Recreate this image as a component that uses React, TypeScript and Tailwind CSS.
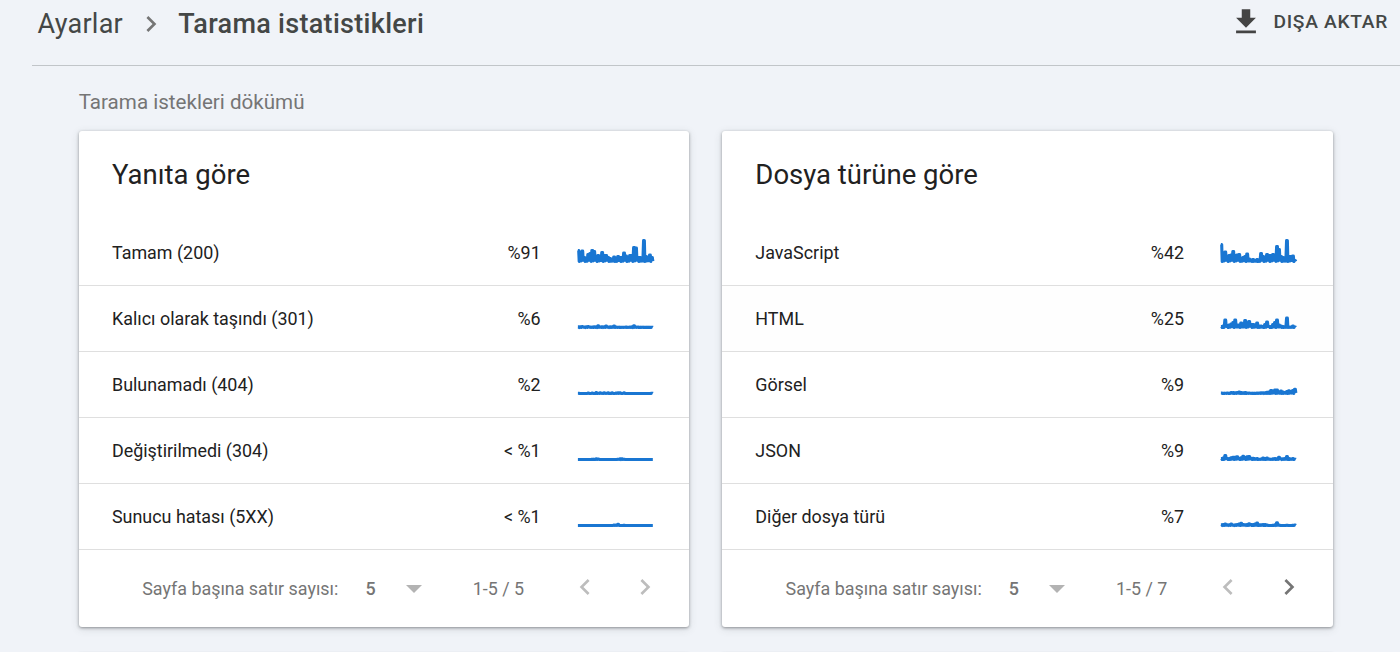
import clsx from 'clsx'

type Row = {
  label: string
  value: string
  // peak heights, left to right
  trend: number[]
  hovered?: boolean
}

const responseRows: Row[] = [
  {
    label: 'Tamam (200)',
    value: '%91',
    trend: [11, 7, 10.5, 4, 3, 7, 8, 11, 10, 5, 6, 5, 9, 6, 6, 4, 3, 2, 4.5, 2, 5, 4, 4, 8.5, 5.5, 4, 6, 6, 14, 13.5, 4, 4, 3, 21, 5, 4, 6.5, 4],
  },
  {
    label: 'Kalıcı olarak taşındı (301)',
    value: '%6',
    trend: [0.6, 0.6, 1, 0.4, 0.8, 1, 0.4, 0.4, 0.8, 0.6, 1.6, 0.5, 0.8, 0.8, 1.5, 0.5, 0.7, 0.8, 1.5, 0.5, 0.3, 0.3, 0.3, 0.3, 0.4, 0.3, 0.4, 0.6, 1.8, 0.4, 0.4, 0.2, 0.3, 0.3, 0.2, 0.2, 0.2, 0.3],
  },
  {
    label: 'Bulunamadı (404)',
    value: '%2',
    trend: [0.3, 0, 0, 0, 0, 0.4, 0, 0.4, 0, 0.9, 0.3, 0.8, 0.2, 0.8, 0.2, 0.7, 0.2, 0.6, 0, 0.4, 0.7, 0.8, 0, 0.7, 0, 0, 0, 0, 0, 0, 0, 0, 0, 0, 0, 0, 0, 0.3],
  },
  {
    label: 'Değiştirilmedi (304)',
    value: '< %1',
    trend: [0, 0, 0, 0, 0, 0, 0, 0.2, 0.2, 0.6, 0.5, 0, 0, 0, 0, 0, 0, 0, 0, 0, 0.3, 0.6, 0.6, 0.2, 0, 0, 0, 0, 0, 0, 0, 0, 0, 0, 0, 0, 0, 0],
  },
  {
    label: 'Sunucu hatası (5XX)',
    value: '< %1',
    trend: [0, 0, 0, 0, 0, 0, 0, 0, 0, 0, 0, 0, 0, 0, 0, 0, 0, 0, 0.4, 0.4, 1.2, 0, 0, 0.2, 0, 0, 0, 0, 0, 0, 0, 0, 0, 0, 0, 0, 0, 0],
  },
]

const fileTypeRows: Row[] = [
  {
    label: 'JavaScript',
    value: '%42',
    trend: [17, 5, 9.5, 4, 6, 6.5, 10, 6, 6.5, 7, 3, 4, 5, 7.5, 2.5, 1.5, 2, 1, 2, 1.5, 8, 5, 4, 7, 6, 6, 7, 6.5, 15, 12, 5, 4, 2, 21, 5, 5, 5.5, 1],
  },
  {
    label: 'HTML',
    value: '%25',
    hovered: true,
    trend: [1, 1.5, 7.5, 1, 2.5, 3.5, 5, 7.5, 2.5, 2.5, 4.5, 3, 7, 4.5, 6, 3, 3, 2.5, 4.5, 1.5, 1.5, 1, 3, 5.5, 1, 1, 3, 5, 7.5, 2.5, 1.5, 1, 0.5, 9.5, 0.5, 0.5, 1.5, 0.5],
  },
  {
    label: 'Görsel',
    value: '%9',
    trend: [0.5, 0.2, 0.3, 0.5, 0.2, 1, 1, 0.8, 1, 1.5, 1, 0.6, 1, 0.5, 0.5, 0.2, 0.2, 0.2, 0.5, 0.5, 0.8, 0.8, 0.8, 1.2, 1.5, 3, 2.5, 3.5, 3.5, 1, 2.5, 1.5, 1, 2, 2.8, 2, 3, 4.3],
  },
  {
    label: 'JSON',
    value: '%9',
    trend: [1, 1.4, 4, 1, 1, 1.8, 2.3, 2.3, 2.8, 1, 1.6, 3.2, 2, 2.8, 3, 1.2, 1.2, 0.8, 1, 0.3, 0.5, 1.5, 1, 1.5, 0.5, 0.3, 0.8, 1, 0.8, 2.3, 0.6, 0.8, 1, 3, 1, 0.5, 1, 0.3],
  },
  {
    label: 'Diğer dosya türü',
    value: '%7',
    trend: [0.8, 1, 1.4, 0.8, 0.8, 1.5, 0.5, 0.6, 1, 1.5, 2.2, 1, 0.8, 1, 1.8, 1, 1, 1.5, 2.5, 0.6, 0.8, 1, 1, 0.4, 0, 0, 0.2, 0.8, 2.8, 0.5, 0, 0, 0, 0.3, 0, 0, 0.2, 0.4],
  },
]

function Sparkline({ values }: { values: number[] }) {
  const points = values
    .flatMap((v, i) => {
      const x = 2.3 + i * 1.99
      return [
        [x - 0.4, 23.5 - v],
        [x + 0.4, 23.5 - v],
        [x + 0.9, 23.5 - Math.min(v, 6) * (i % 3) * 0.1],
      ]
    })
    .map(([x, y]) => `${x.toFixed(2)},${y.toFixed(2)}`)
    .join(' ')

  return (
    <svg width="80" height="30" viewBox="0 0 80 30" fill="none" className="shrink-0">
      <polyline points={points} stroke="#1976d2" strokeWidth="3.1" strokeLinejoin="round" />
    </svg>
  )
}

function Chevron({ left, className }: { left?: boolean; className?: string }) {
  return (
    <svg width="32" height="32" viewBox="0 0 24 24" fill="currentColor" className={clsx('shrink-0', className)}>
      <path d={left ? 'M15.41 7.41 14 6l-6 6 6 6 1.41-1.41L10.83 12z' : 'M10 6 8.59 7.41 13.17 12l-4.58 4.59L10 18l6-6z'} />
    </svg>
  )
}

function StatsCard({ title, rows, range, hasNext }: { title: string; rows: Row[]; range: string; hasNext?: boolean }) {
  return (
    <section className="w-[610.7px] h-[496px] shrink-0 rounded-[3px] bg-white shadow-[0_1px_3px_rgba(60,64,67,0.5),0_2px_8px_rgba(60,64,67,0.15)]">
      <h2 className="h-[89px] pl-[33.3px] pt-[25px] text-[27.5px] leading-[38px] text-[#212121]">{title}</h2>
      <ul>
        {rows.map((row) => (
          <li
            key={row.label}
            className={clsx('flex h-[66px] items-center border-b border-[#dfdfdf] pl-[33.3px] pr-[33.7px]', row.hovered && 'bg-[#fefefe]')}
          >
            <span className="flex-1 text-[17.9px] leading-[27px] text-[#212121]">{row.label}</span>
            <span className="mr-[35px] text-[17.9px] leading-[27px] text-[#212121]">{row.value}</span>
            <Sparkline values={row.trend} />
          </li>
        ))}
      </ul>
      <div className="flex h-[77px] items-center pl-[63.5px] text-[17.9px] leading-[27px] text-[#757575]">
        <span className="w-[223.2px]">Sayfa başına satır sayısı:</span>
        <span className="w-[40.3px] font-medium">5</span>
        <svg width="16" height="8" viewBox="0 0 16 8" fill="#b3b3b3">
          <path d="M0 0h16L8 8z" />
        </svg>
        <span className="ml-[51px] w-[96.2px]">{range}</span>
        <Chevron left className="mb-1 text-[#bdbdbd]" />
        <Chevron className={clsx('mb-1 ml-[28.6px]', hasNext ? 'text-[#757575]' : 'text-[#bdbdbd]')} />
      </div>
    </section>
  )
}

export default function App() {
  return (
    <div className="h-[652px] overflow-hidden bg-[#f0f3f8] font-[Roboto,sans-serif]">
      <header className="ml-8 flex h-[66px] items-start border-b border-[#c1c5c9] pl-[5.5px] pr-[12px] text-[#444746]">
        <nav className="flex flex-1 items-center pt-1 text-[27px] leading-[40px]">
          <span className="tracking-[0.25px]">Ayarlar</span>
          <Chevron className="mx-[12px] text-[#757575]" />
          <span className="-ml-[0.7px] font-medium tracking-[0.3px]">Tarama istatistikleri</span>
        </nav>
        <button className="flex items-center pt-[4.5px]">
          <svg width="34" height="34" viewBox="0 0 24 24" fill="#444">
            <path d="M19 9h-4V3H9v6H5l7 7zM5 18v2h14v-2z" />
          </svg>
          <span className="ml-[10.5px] text-[19.2px] font-medium leading-[28px] tracking-[0.7px]">DIŞA AKTAR</span>
        </button>
      </header>
      <main className="pl-[78.7px]">
        <h1 className="h-[65px] pt-[21px] text-[20.6px] leading-[30px] text-[#757575]">Tarama istekleri dökümü</h1>
        <div className="flex gap-[32.7px]">
          <StatsCard title="Yanıta göre" rows={responseRows} range="1-5 / 5" />
          <StatsCard title="Dosya türüne göre" rows={fileTypeRows} range="1-5 / 7" hasNext />
        </div>
        <div className="mt-[26px] flex gap-[32.7px]">
          <div className="h-10 w-[610.7px] shrink-0 rounded-[3px] bg-white shadow-[0_1px_3px_rgba(60,64,67,0.5)]" />
          <div className="h-10 w-[610.7px] shrink-0 rounded-[3px] bg-white shadow-[0_1px_3px_rgba(60,64,67,0.5)]" />
        </div>
      </main>
    </div>
  )
}
